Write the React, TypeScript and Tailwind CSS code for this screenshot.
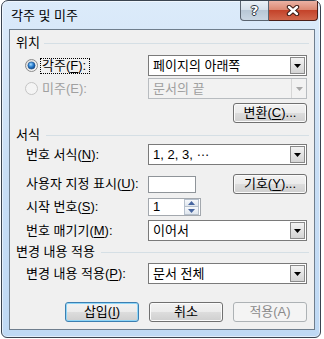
import React from "react";

const font = "font-['Liberation_Sans','Noto_Sans_CJK_KR',sans-serif]";

function Arrow({ disabled }: { disabled?: boolean }) {
  return (
    <svg width="7" height="4" viewBox="0 0 7 4">
      <path d="M0 0 H7 L3.5 4 Z" fill={disabled ? "#a8a8a8" : "#000"} />
    </svg>
  );
}

function Combo({ text, disabled }: { text: React.ReactNode; disabled?: boolean }) {
  if (disabled) {
    return (
      <div className="w-[159px] h-[21px] border border-[#b8bcc0] bg-[#f2f2f2] flex items-center">
        <span className="flex-1 pl-[4px] text-[#a0a0a0] leading-[14px]">{text}</span>
        <div className="w-[15px] h-[19px] border-l border-[#d6d6d6] flex items-center justify-center">
          <Arrow disabled />
        </div>
      </div>
    );
  }
  return (
    <div className="w-[159px] h-[21px] border border-[#7a7a7a] bg-white flex items-center">
      <span className="flex-1 pl-[4px] leading-[14px]">{text}</span>
      <div className="w-[15px] h-[17px] mr-[1px] border border-[#8a8a8a] bg-gradient-to-b from-[#f3f3f3] to-[#d4d4d4] flex items-center justify-center">
        <Arrow />
      </div>
    </div>
  );
}

function Btn({
  children,
  kind,
}: {
  children: React.ReactNode;
  kind?: "default" | "disabled";
}) {
  if (kind === "disabled") {
    return (
      <div className="w-[74px] h-[20px] rounded-[3px] border border-[#adb2b5] bg-[#f4f4f4] flex items-center justify-center text-[#8a8a8a] leading-[14px]">
        {children}
      </div>
    );
  }
  const border =
    kind === "default"
      ? "border-[#3c7fb1] shadow-[inset_0_0_0_1px_#8fd6f8]"
      : "border-[#707070] shadow-[inset_0_0_0_1px_#fbfbfb]";
  return (
    <div
      className={`w-[74px] h-[20px] rounded-[3px] border ${border} bg-[linear-gradient(#f2f2f2_0%,#ebebeb_50%,#dddddd_50%,#cfcfcf_100%)] flex items-center justify-center leading-[14px]`}
    >
      {children}
    </div>
  );
}

function U({ c }: { c: string }) {
  return <span className="underline underline-offset-[2px]">{c}</span>;
}

function Header({ text, mt }: { text: string; mt: string }) {
  return (
    <div className={`${mt} h-[14px] flex items-center pl-[6px] pr-[5px]`}>
      <span className="leading-[14px]">{text}</span>
      <div className="flex-1 h-px bg-[#d5dfe5] ml-[6px]" />
    </div>
  );
}

function Radio({ checked, disabled }: { checked?: boolean; disabled?: boolean }) {
  return (
    <svg width="13" height="13" viewBox="0 0 13 13">
      <defs>
        <linearGradient id="rg" x1="0" y1="0" x2="1" y2="1">
          <stop offset="0" stopColor="#d8d8d8" />
          <stop offset="1" stopColor="#fbfbfb" />
        </linearGradient>
        <radialGradient id="dot" cx="0.4" cy="0.35" r="0.7">
          <stop offset="0" stopColor="#a8dcff" />
          <stop offset="0.5" stopColor="#2a7fd0" />
          <stop offset="1" stopColor="#0c3f7e" />
        </radialGradient>
      </defs>
      <circle
        cx="6.5"
        cy="6.5"
        r="6"
        fill={disabled ? "#f4f4f4" : "url(#rg)"}
        stroke={disabled ? "#c4c4c4" : "#8a8a8a"}
        strokeWidth="1"
      />
      {checked && <circle cx="6.5" cy="6.5" r="3.6" fill="url(#dot)" stroke="#1b4f8a" strokeWidth="0.6" />}
    </svg>
  );
}

export default function App() {
  return (
    <div className={`w-[324px] h-[339px] bg-white text-[13px] text-black ${font}`}>
      <div className="ml-[1px] w-[320px] h-[338px] rounded-t-[7px] rounded-b-[6px] border border-[#3a4450] bg-gradient-to-b from-[#dcebfa] via-[#c8def5] to-[#bfd9f4] shadow-[inset_0_0_0_1px_rgba(255,255,255,0.55)] flex flex-col">
        {/* Title bar */}
        <div className="h-[28px] flex items-start">
          <div className="pl-[9px] pt-[8px] leading-[14px]">각주 및 미주</div>
          <div className="ml-auto mr-[2px] flex">
            <div className="w-[29px] h-[20px] rounded-bl-[4px] border border-[#5a6470] border-t-0 bg-[linear-gradient(#eaf0f6_0%,#d6e0ea_45%,#b8c7d6_50%,#c9d6e3_100%)] flex items-center justify-center">
              <span className="font-['DejaVu_Sans',sans-serif] font-bold text-[13px] leading-[14px] text-white [text-shadow:1px_0_#2c3440,-1px_0_#2c3440,0_1px_#2c3440,0_-1px_#2c3440]">
                ?
              </span>
            </div>
            <div className="w-[49px] h-[20px] rounded-br-[4px] border border-[#4a1e18] border-t-0 border-l-0 bg-[linear-gradient(#eab2a4_0%,#dc8a74_45%,#c4432a_50%,#d2674c_100%)] flex items-center justify-center">
              <svg width="14" height="11" viewBox="0 0 14 11">
                <path d="M3 2 L11 9 M11 2 L3 9" stroke="#3a1a14" strokeWidth="4.4" strokeLinecap="round" />
                <path d="M3 2 L11 9 M11 2 L3 9" stroke="#ffffff" strokeWidth="2.4" strokeLinecap="round" />
              </svg>
            </div>
          </div>
        </div>

        {/* Client area */}
        <div className="ml-[7px] w-[306px] h-[301px] border border-[#6f7e8d] bg-[#f0f0f0] flex flex-col">
          <div className="mt-[6px] h-[14px] flex items-center pl-[6px] pr-[5px]">
            <span className="leading-[14px]">위치</span>
            <div className="flex-1 h-px bg-[#d5dfe5] ml-[4px]" />
          </div>

          <div className="mt-[5px] h-[21px] flex items-center pl-[15px] pr-[7px]">
            <Radio checked />
            <span className="ml-[2px] w-[50px] h-[16px] border border-dotted border-black px-[1px] leading-[14px] whitespace-nowrap">
              각주(<U c="F" />):
            </span>
            <div className="ml-auto">
              <Combo text="페이지의 아래쪽" />
            </div>
          </div>

          <div className="mt-[2px] h-[21px] flex items-center pl-[15px] pr-[7px]">
            <Radio disabled />
            <span className="ml-[4px] leading-[14px] text-[#a0a0a0]">미주(E):</span>
            <div className="ml-auto">
              <Combo text="문서의 끝" disabled />
            </div>
          </div>

          <div className="mt-[4px] h-[20px] flex justify-end pr-[7px]">
            <Btn>
              변환(<U c="C" />)...
            </Btn>
          </div>

          <Header text="서식" mt="mt-[5px]" />

          <div className="mt-[2px] h-[21px] flex items-center pl-[16px] pr-[7px]">
            <span className="w-[122px] leading-[14px]">
              번호 서식(<U c="N" />):
            </span>
            <Combo
              text={
                <>
                  1, 2, 3, <span className="inline-block -translate-y-[3px]">…</span>
                </>
              }
            />
          </div>

          <div className="mt-[9px] h-[20px] flex items-center pl-[16px] pr-[7px]">
            <span className="w-[122px] leading-[14px] whitespace-nowrap">
              사용자 지정 표시(<U c="U" />):
            </span>
            <div className="w-[48px] h-[17px] border border-[#8f9499] bg-white" />
            <div className="ml-auto">
              <Btn>
                기호(<U c="Y" />)...
              </Btn>
            </div>
          </div>

          <div className="mt-[4px] h-[18px] flex items-center pl-[16px] pr-[7px]">
            <span className="w-[122px] leading-[14px]">
              시작 번호(<U c="S" />):
            </span>
            <div className="w-[53px] h-[18px] border border-[#a3a8ae] bg-white flex items-center">
              <span className="flex-1 pl-[4px] leading-[14px] text-[13px]">1</span>
              <div className="w-[15px] h-[16px] flex flex-col mr-[1px]">
                <div className="h-[8px] border border-[#b6c0cc] bg-gradient-to-b from-[#f6f8fb] to-[#dfe6ee] flex items-center justify-center">
                  <svg width="7" height="4" viewBox="0 0 7 4">
                    <path d="M0 4 H7 L3.5 0 Z" fill="#4766a0" />
                  </svg>
                </div>
                <div className="h-[8px] border border-t-0 border-[#b6c0cc] bg-gradient-to-b from-[#f6f8fb] to-[#dfe6ee] flex items-center justify-center">
                  <svg width="7" height="4" viewBox="0 0 7 4">
                    <path d="M0 0 H7 L3.5 4 Z" fill="#4766a0" />
                  </svg>
                </div>
              </div>
            </div>
          </div>

          <div className="mt-[4px] h-[21px] flex items-center pl-[16px] pr-[7px]">
            <span className="w-[122px] leading-[14px]">
              번호 매기기(<U c="M" />):
            </span>
            <Combo text="이어서" />
          </div>

          <Header text="변경 내용 적용" mt="mt-[4px]" />

          <div className="mt-[4px] h-[21px] flex items-center pl-[16px] pr-[7px]">
            <span className="w-[122px] leading-[14px]">
              변경 내용 적용(<U c="P" />):
            </span>
            <Combo text="문서 전체" />
          </div>

          <div className="mt-[18px] h-[20px] flex justify-end gap-[10px] pr-[7px]">
            <Btn kind="default">
              삽입(<U c="I" />)
            </Btn>
            <Btn>취소</Btn>
            <Btn kind="disabled">적용(A)</Btn>
          </div>
        </div>
      </div>
    </div>
  );
}
